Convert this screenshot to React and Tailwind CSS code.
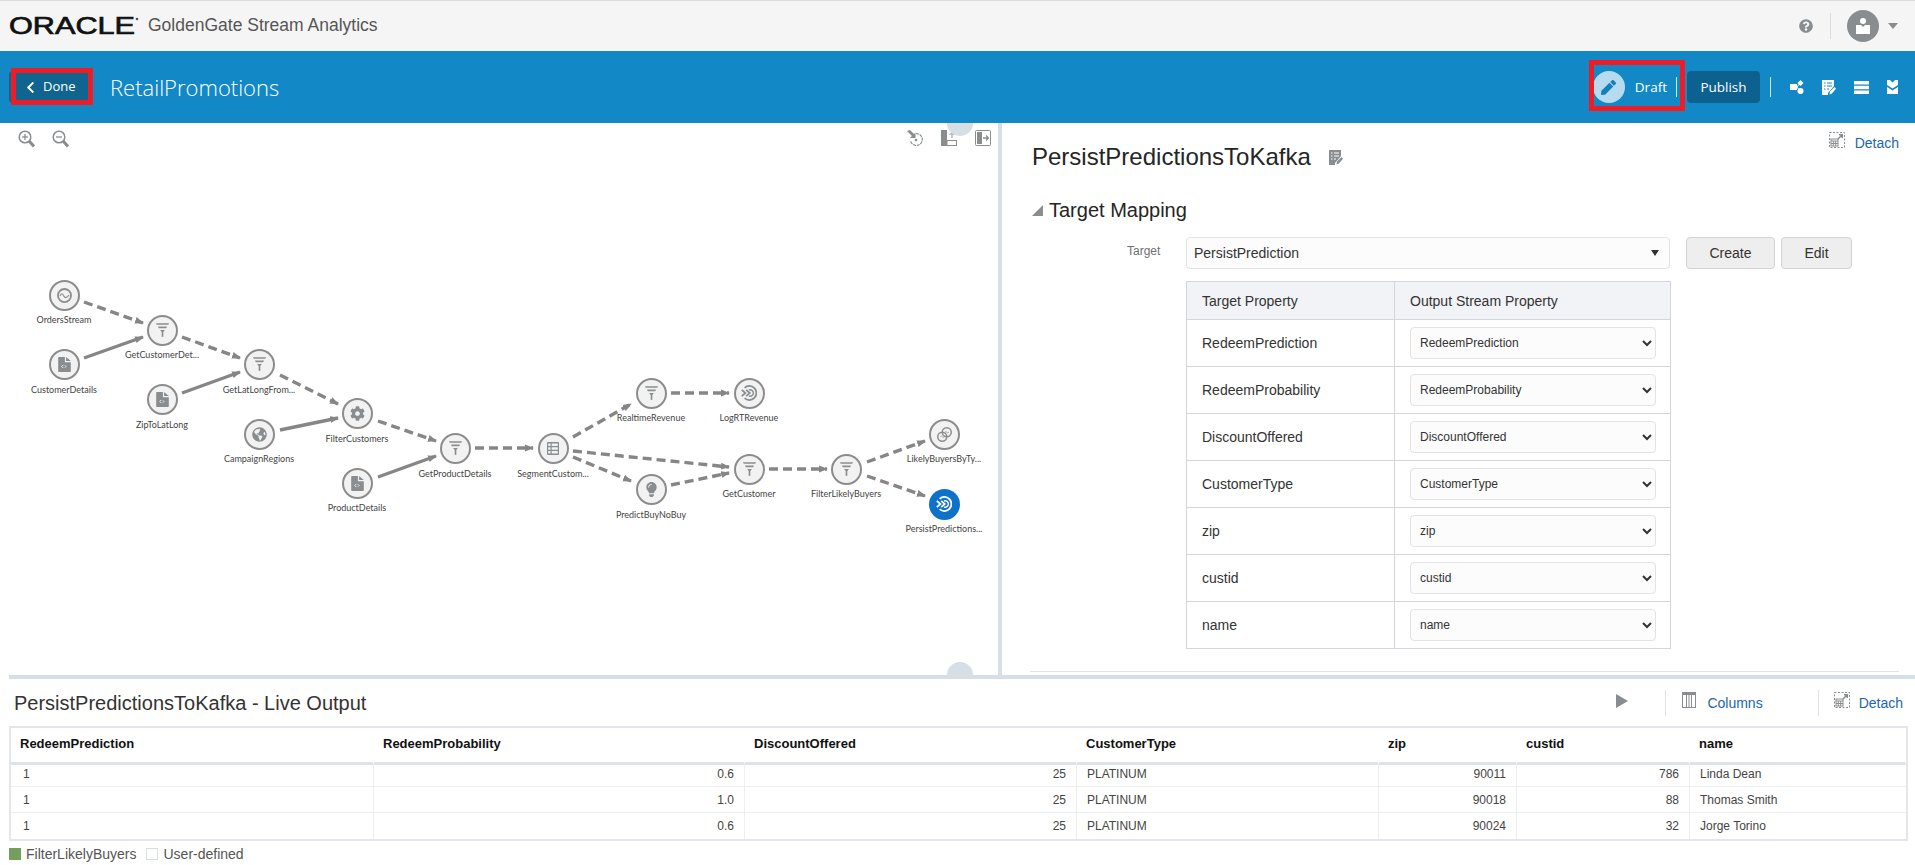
import React from "react";
import { FaChevronLeft, FaCog, FaGlobeAmericas, FaLightbulb, FaPen, FaQuestionCircle } from "react-icons/fa";

const G = "#8a8d8f";

const Filter = ({ c = G }) => (
  <svg width="13" height="14" viewBox="0 0 19 20">
    <path d="M0 0H19L18 2.500H1Z M3 5H16L15 7.500H4Z M6 10H13L11 12.500H8Z" fill={c} />
    <rect x="8.300" y="10" width="2.400" height="10" fill={c} />
  </svg>
);
const Doc = () => (
  <svg width="13" height="15" viewBox="0 0 16 19">
    <path d="M0 1A1 1 0 0 1 1 0H8.500V6.500H16V18A1 1 0 0 1 15 19H1A1 1 0 0 1 0 18Z M10 0L16 5H10Z" fill={G} />
    <path d="M6.500 10L4.500 12L6.500 14" stroke="#f2f2f2" strokeWidth="1.200" fill="none" />
    <path d="M8.500 10.500L10 12L8.500 13.500" stroke="#f2f2f2" strokeWidth="1.200" fill="none" />
  </svg>
);
const Stream = () => (
  <svg width="15" height="15" viewBox="0 0 20 20">
    <circle cx="10" cy="10" r="8.700" stroke={G} strokeWidth="2.400" fill="none" />
    <path d="M4 10.500C6 6.500 7.500 7 9 10.500C10.500 13.500 12 14 16 9.500" stroke={G} strokeWidth="1.500" fill="none" />
  </svg>
);
const Grid = () => (
  <svg width="12" height="13" viewBox="0 0 12 13">
    <rect width="12" height="13" rx="1" fill={G} />
    <path d="M1.200 1.500H3.500V4H1.200Z M1.200 5.300H3.500V7.700H1.200Z M1.200 9H3.500V11.500H1.200Z M4.700 1.500H10.800V4H4.700Z M4.700 5.300H10.800V7.700H4.700Z M4.700 9H10.800V11.500H4.700Z" fill="#f2f2f2" />
  </svg>
);
const Target = ({ c = G }) => (
  <svg width="16" height="16" viewBox="0 0 20 20">
    <path d="M4.500 3.500A8.800 8.800 0 1 1 4.500 16.500" stroke={c} strokeWidth="2.200" fill="none" />
    <path d="M1 6L5.500 10L1 14M6.500 6L11 10L6.500 14" stroke={c} strokeWidth="2.200" fill="none" />
    <path d="M10 6.300A4 4 0 1 1 10 13.700" stroke={c} strokeWidth="1.800" fill="none" />
  </svg>
);
const Rings = () => (
  <svg width="15" height="15" viewBox="0 0 20 20">
    <circle cx="7" cy="13" r="6" stroke={G} strokeWidth="2" fill="none" />
    <circle cx="13" cy="7" r="6" stroke={G} strokeWidth="2" fill="none" />
    <path d="M4.500 13Q6 11 7 13T10 12.500M10.500 7Q12 5 13 7T16 6.500" stroke={G} strokeWidth="1" fill="none" />
  </svg>
);

const icons = {
  filter: <Filter />,
  doc: <Doc />,
  stream: <Stream />,
  grid: <Grid />,
  target: <Target />,
  rings: <Rings />,
  gear: <FaCog size={15} color={G} />,
  globe: <FaGlobeAmericas size={15} color={G} />,
  bulb: <FaLightbulb size={15} color={G} />,
  selected: <Target c="#fff" />,
};

const nodes = [
  ["OrdersStream", 64, 295, 320, "stream"],
  ["GetCustomerDet...", 162, 330, 355, "filter"],
  ["CustomerDetails", 64, 364, 390, "doc"],
  ["GetLatLongFrom...", 259, 364, 390, "filter"],
  ["ZipToLatLong", 162, 399, 425, "doc"],
  ["CampaignRegions", 259, 434, 459, "globe"],
  ["FilterCustomers", 357, 413, 439, "gear"],
  ["GetProductDetails", 455, 448, 474, "filter"],
  ["ProductDetails", 357, 483, 508, "doc"],
  ["SegmentCustom...", 553, 448, 474, "grid"],
  ["RealtimeRevenue", 651, 393, 418, "filter"],
  ["LogRTRevenue", 749, 393, 418, "target"],
  ["PredictBuyNoBuy", 651, 489, 515, "bulb"],
  ["GetCustomer", 749, 469, 494, "filter"],
  ["FilterLikelyBuyers", 846, 469, 494, "filter"],
  ["LikelyBuyersByTy...", 944, 434, 459, "rings"],
  ["PersistPredictions...", 944, 504, 529, "selected"],
];

const edges = [
  [84, 302, 143, 323, 1], [84, 358, 143, 337, 0], [182, 337, 240, 358, 1], [182, 393, 240, 372, 0],
  [280, 375, 338, 404, 1], [280, 430, 338, 418, 0], [378, 421, 436, 441, 1], [378, 477, 436, 456, 0],
  [475, 448, 533, 448, 1], [573, 437, 631, 404, 1], [573, 451, 729, 467, 1], [573, 457, 631, 481, 1],
  [671, 393, 729, 393, 1], [671, 485, 729, 473, 1], [769, 469, 827, 469, 1], [867, 462, 925, 441, 1],
  [867, 476, 925, 496, 1],
];

function Canvas() {
  return (
    <div className="absolute inset-0 overflow-hidden">
      <svg className="absolute left-0 top-0" width="998" height="552" viewBox="0 123 998 552">
        <defs>
          <marker id="arrow" markerUnits="userSpaceOnUse" markerWidth="9" markerHeight="8" refX="8" refY="4" orient="auto">
            <path d="M0 0.500L9 4L0 7.500Z" fill="#868686" />
          </marker>
        </defs>
        {edges.map(([a, b, c, d, dashed], i) => (
          <line key={i} x1={a} y1={b} x2={c} y2={d} stroke="#868686" strokeWidth="3.400" strokeDasharray={dashed ? "9 5" : undefined} markerEnd="url(#arrow)" />
        ))}
      </svg>
      {nodes.map(([name, x, y, ly, icon]) => (
        <React.Fragment key={name}>
          <div
            className={
              icon === "selected"
                ? "absolute flex h-[31px] w-[31px] items-center justify-center rounded-full bg-[#0f72c8]"
                : "absolute flex h-[31px] w-[31px] items-center justify-center rounded-full border-2 border-[#8c8c8c] bg-[#f2f2f2]"
            }
            style={{ left: x - 15.5, top: y - 123 - 15.5 }}
          >
            {icons[icon]}
          </div>
          <div
            className="absolute w-[110px] text-center font-['Lato',sans-serif] text-[9px] leading-[14px] text-[#444]"
            style={{ left: x - 55, top: ly - 123 - 7 }}
          >
            {name}
          </div>
        </React.Fragment>
      ))}
    </div>
  );
}

const Zoom = ({ plus }) => (
  <svg width="17" height="18" viewBox="0 0 17 18">
    <circle cx="7" cy="7" r="5.800" fill="none" stroke={G} strokeWidth="1.500" />
    <path d="M4 7H10" stroke={G} strokeWidth="1.300" />
    {plus && <path d="M7 4V10" stroke={G} strokeWidth="1.300" />}
    <path d="M11 11L16 16.500" stroke={G} strokeWidth="3" />
  </svg>
);

const DetachIcon = () => (
  <svg width="16" height="16" viewBox="0 0 16 16">
    <rect x="0.500" y="0.500" width="15" height="15" fill="none" stroke={G} strokeDasharray="2 1.500" />
    <rect x="2" y="7" width="7" height="7" fill="none" stroke={G} />
    <path d="M2 9H9M4.300 9V14M6.700 9V14M2 11.500H9" stroke={G} />
    <path d="M9 7L13 3M10 2.800H13.300V6" stroke={G} strokeWidth="1.500" fill="none" />
  </svg>
);

const EditDoc = ({ c = G, s = 14 }) => (
  <svg width={s} height={s + 1} viewBox="0 0 14 15">
    <path d="M0 0H12V6L6 13V15H0Z" fill={c} />
    <path d="M2 3H3.500M5 3H10M2 6H3.500M5 6H10M2 9H3.500M5 9H7" stroke={c === "#fff" ? "#1289c6" : "#fff"} strokeWidth="1" />
    <path d="M7.500 14.500L8 11.500L12.500 7L14 8.700L9.700 13.700Z" fill={c} />
  </svg>
);

const BarIcons = () => (
  <div className="flex items-center gap-[18px]">
    <svg width="14" height="14" viewBox="0 0 14 14">
      <rect x="0" y="4" width="7" height="6" fill="#fff" />
      <path d="M10.500 0L13.500 3L10.500 6L7.500 3Z" fill="#fff" />
      <circle cx="10.500" cy="11" r="3" fill="#fff" />
      <path d="M7 7L10 3M7 7L10 11" stroke="#fff" />
    </svg>
    <EditDoc c="#fff" s={14} />
    <svg width="15" height="13" viewBox="0 0 15 13">
      <path d="M0 0H15V3.500H0Z M0 4.700H15V8.200H0Z M0 9.500H15V13H0Z" fill="#fff" />
    </svg>
    <svg width="11" height="14" viewBox="0 0 11 14">
      <path d="M0 0H3L5.500 2.500L8 0H11V5L5.500 8.500L0 5Z M0 7L5.500 10.500L11 7V14H0Z" fill="#fff" />
    </svg>
  </div>
);

const Label = ({ children }) => <span className="text-sm leading-none text-[#1a67ae]">{children}</span>;

const mapping = ["RedeemPrediction", "RedeemProbability", "DiscountOffered", "CustomerType", "zip", "custid", "name"];

const rows = [
  ["1", "0.6", "25", "PLATINUM", "90011", "786", "Linda Dean"],
  ["1", "1.0", "25", "PLATINUM", "90018", "88", "Thomas Smith"],
  ["1", "0.6", "25", "PLATINUM", "90024", "32", "Jorge Torino"],
];

const RIGHT = [false, true, true, false, true, true, false];

export default function App() {
  return (
    <div className="relative h-[865px] w-[1915px] overflow-hidden bg-white font-['Liberation_Sans',Arial,sans-serif] text-[#333]">
      {/* top bar */}
      <header className="flex h-[51px] items-center border-t border-[#dcdcdc] bg-[#f5f5f5]">
        <svg width="130" height="30" viewBox="0 -3 130 30" className="ml-[9px] overflow-visible">
          <text x="0" y="20" fontFamily="Liberation Sans" fontWeight="400" fontSize="24" fill="#111" stroke="#111" strokeWidth="0.700" textLength="126" lengthAdjust="spacingAndGlyphs">ORACLE</text>
          <circle cx="128" cy="5" r="1.300" fill="#555" />
        </svg>
        <span className="ml-[9px] text-[17.5px] leading-none text-[#555]">GoldenGate Stream Analytics</span>
        <div className="ml-auto flex items-center pr-[17px]">
          <FaQuestionCircle size={14} color="#8a8d8f" />
          <div className="ml-[17px] h-[26px] w-px bg-[#dcdcdc]" />
          <div className="ml-[16px] flex h-8 w-8 items-center justify-center rounded-full bg-[#8a8d8f]">
            <svg width="14" height="16" viewBox="0 0 14 16">
              <circle cx="7" cy="3" r="3" fill="#fff" />
              <path d="M0 7H5L7 9L9 7H14V16H0Z" fill="#fff" />
            </svg>
          </div>
          <div className="ml-[9px] h-0 w-0 border-x-[5px] border-t-[6px] border-x-transparent border-t-[#8a8d8f]" />
        </div>
      </header>

      {/* blue bar */}
      <div className="flex h-[72px] items-center bg-[#1289c6] text-white">
        <div className="relative ml-[9px] flex h-8 w-[79px] items-center rounded-sm bg-[#0f6490] pl-[15px] font-['Open_Sans',sans-serif] text-[13px]">
          <FaChevronLeft size={13} />
          <span className="ml-[6px]">Done</span>
          <div className="absolute -bottom-[2px] -right-[5px] -top-[3px] left-[2px] border-[5px] border-[#ee1c25]" />
        </div>
        <span className="ml-[22px] font-['Open_Sans',sans-serif] text-[22px] font-light">RetailPromotions</span>
        <div className="ml-auto flex items-center pr-[17px]">
          <div className="relative flex items-center">
            <div className="flex h-8 w-8 items-center justify-center rounded-full bg-[#b7dbee]">
              <FaPen size={15} color="#1280bd" />
            </div>
            <span className="ml-[10px] font-['Open_Sans',sans-serif] text-[13.5px]">Draft</span>
            <div className="ml-[9px] h-5 w-px bg-[#cfe7f4]" />
            <div className="absolute -left-[4px] -top-[11px] h-[51px] w-[96px] border-[5px] border-[#ee1c25]" />
          </div>
          <button className="ml-[10px] h-8 w-[73px] rounded-sm bg-[#0d618f] font-['Open_Sans',sans-serif] text-[13.5px] text-white">Publish</button>
          <div className="ml-[10px] mr-[19px] h-5 w-px bg-[#cfe7f4]" />
          <BarIcons />
        </div>
      </div>

      {/* main split */}
      <div className="flex h-[552px]">
        <section className="relative w-[998px] shrink-0">
          <Canvas />
          <div className="relative flex items-start justify-between pl-[18px] pr-[7px] pt-[7px]">
            <div className="flex gap-[17px]">
              <Zoom plus />
              <Zoom />
            </div>
            <div className="flex gap-[18px]">
              <svg width="16" height="16" viewBox="0 0 16 16">
                <path d="M0 1L3 0L7 4L8.500 2.500V8H3L5 6Z" fill={G} />
                <path d="M9 3.500A6 6 0 1 1 3.500 11" fill="none" stroke={G} strokeWidth="1.200" strokeDasharray="3 0.800" />
                <circle cx="9" cy="10" r="1.300" fill={G} />
              </svg>
              <svg width="16" height="16" viewBox="0 0 16 16">
                <path d="M0 0H6V16H0Z" fill={G} />
                <rect x="6" y="10.500" width="9.500" height="5" fill="none" stroke={G} />
                <path d="M11 8V3M8.500 5L11 2.500L13 5" stroke={G} fill="none" />
              </svg>
              <svg width="16" height="16" viewBox="0 0 16 16">
                <rect x="0.500" y="0.500" width="15" height="15" rx="1" fill="none" stroke={G} />
                <path d="M2 2H7V14H2Z" fill={G} />
                <path d="M8 8H13M11 5.500L13.500 8L11 10.500" stroke={G} strokeWidth="1.300" fill="none" />
              </svg>
            </div>
          </div>
        </section>
        <div className="w-1 shrink-0 bg-[#d6dfe6]" />
        <section className="relative flex-1 pl-[30px]">
          <div className="flex items-center pt-[20px]">
            <h1 className="text-2xl leading-[28px] text-[#252525]">PersistPredictionsToKafka</h1>
            <span className="ml-[18px]"><EditDoc /></span>
            <div className="ml-auto mr-[16px] -mt-[28px] flex items-center gap-[10px]">
              <span className="mb-[6px]"><DetachIcon /></span>
              <Label>Detach</Label>
            </div>
          </div>
          <div className="mt-[27px] flex items-center">
            <div className="h-0 w-0 border-b-[11px] border-l-[11px] border-b-[#8a8d8f] border-l-transparent" />
            <h2 className="ml-[6px] text-xl leading-[24px] text-[#252525]">Target Mapping</h2>
          </div>
          <div className="mt-[15px] flex items-start">
            <span className="ml-[95px] w-[59px] pt-[6px] text-xs text-[#6f6f6f]">Target</span>
            <div className="w-[484px]">
              <div className="flex h-[32px] items-center justify-between rounded-sm border border-[#e3e3e3] bg-[#fcfcfc] pl-[7px] pr-[10px] text-sm">
                <span>PersistPrediction</span>
                <div className="h-0 w-0 border-x-[4px] border-t-[6px] border-x-transparent border-t-[#333]" />
              </div>
              <table className="mt-[12px] w-[484px] table-fixed border-collapse text-sm">
                <colgroup>
                  <col className="w-[208px]" />
                  <col className="w-[276px]" />
                </colgroup>
                <thead>
                  <tr className="h-[38px] bg-[#f1f3f7]">
                    <th className="border border-[#d3d6da] pl-[15px] text-left font-normal">Target Property</th>
                    <th className="border border-[#d3d6da] pl-[15px] text-left font-normal">Output Stream Property</th>
                  </tr>
                </thead>
                <tbody>
                  {mapping.map((m) => (
                    <tr key={m} className="h-[47px]">
                      <td className="border border-[#d3d6da] pl-[15px]">{m}</td>
                      <td className="border border-[#d3d6da] pl-[15px]">
                        <select
                          defaultValue={m}
                          className="block h-8 w-[246px] rounded-sm border border-[#e3e3e3] bg-[#fcfcfc] pl-[5px] text-xs text-[#333]"
                        >
                          <option value={m}>{m}</option>
                        </select>
                      </td>
                    </tr>
                  ))}
                </tbody>
              </table>
            </div>
            <button className="ml-[16px] h-[32px] w-[89px] rounded-sm border border-[#d3d3d3] bg-[#eeeeee] text-sm">Create</button>
            <button className="ml-[6px] h-[32px] w-[71px] rounded-sm border border-[#d3d3d3] bg-[#eeeeee] text-sm">Edit</button>
          </div>
          <div className="absolute bottom-[3px] left-[28px] right-[16px] h-px bg-[#dfe4ea]" />
        </section>
      </div>

      {/* bottom */}
      <div className="ml-[9px] h-1 bg-[#d6dfe6]" />
      <div className="flex h-[47px] items-center pl-[14px] pr-[12px]">
        <h3 className="text-xl leading-none text-[#333]">PersistPredictionsToKafka - Live Output</h3>
        <div className="ml-auto flex items-center">
          <div className="mb-[4px] h-0 w-0 border-y-[7px] border-l-[12px] border-y-transparent border-l-[#8a8d8f]" />
          <div className="ml-[37px] h-[26px] w-px bg-[#dfe2e6]" />
          <svg width="14" height="16" viewBox="0 0 14 16" className="mb-[6px] ml-[16px]">
            <rect x="0.500" y="0.500" width="13" height="15" fill="none" stroke={G} />
            <path d="M1 1H13V3H1Z" fill={G} />
            <path d="M4.500 3V15M7 3V15M9.500 3V15" stroke={G} />
          </svg>
          <span className="ml-[11px] mr-[55px]"><Label>Columns</Label></span>
          <div className="h-[26px] w-px bg-[#dfe2e6]" />
          <span className="mb-[6px] ml-[15px] mr-[9px]"><DetachIcon /></span>
          <Label>Detach</Label>
        </div>
      </div>
      <div className="ml-[9px] w-[1899px] border-2 border-[#e3e6ea]">
        <table className="w-[1895px] table-fixed border-separate border-spacing-0 text-xs">
          <colgroup>
            {[363, 371, 332, 302, 138, 173, 216].map((w, i) => (
              <col key={i} style={{ width: w }} />
            ))}
          </colgroup>
          <thead>
            <tr className="h-[37px]">
              {["RedeemPrediction", "RedeemProbability", "DiscountOffered", "CustomerType", "zip", "custid", "name"].map((h) => (
                <th key={h} className="border-b-[3px] border-r border-b-[#dee3e8] border-r-white pb-[2px] pl-[9px] text-left text-[13px] font-bold text-[#111]">
                  {h}
                </th>
              ))}
            </tr>
          </thead>
          <tbody>
            {rows.map((r, i) => (
              <tr key={i} className={i === 0 ? "h-[22px]" : "h-[26px]"}>
                {r.map((v, j) => (
                  <td
                    key={j}
                    className={
                      (RIGHT[j] ? "pr-[10px] text-right " : j === 0 ? "pl-[12px] text-left " : "pl-[10px] text-left ") +
                      (i === 0 ? "pb-[4px] " : "") +
                      (i < 2 ? "border-b border-b-[#eceef0] " : "") +
                      (j < 6 ? "border-r border-r-[#eceef0] " : "") +
                      "text-[#444]"
                    }
                  >
                    {v}
                  </td>
                ))}
              </tr>
            ))}
          </tbody>
        </table>
      </div>
      <div className="ml-[9px] mt-[6px] flex items-center text-sm leading-[14px] text-[#555]">
        <div className="h-3 w-3 bg-[#739f5b]" />
        <span className="ml-[5px]">FilterLikelyBuyers</span>
        <div className="ml-[10px] h-3 w-3 border border-[#d9dde2]" />
        <span className="ml-[5px]">User-defined</span>
      </div>

      {/* splitter handles */}
      <div className="absolute left-[947px] top-[110px] h-[26px] w-[26px] rounded-full bg-[#d6dfe6]" style={{ clipPath: "inset(13px 0 0 0)" }} />
      <div className="absolute left-[947px] top-[662px] h-[26px] w-[26px] rounded-full bg-[#d6dfe6]" style={{ clipPath: "inset(0 0 13px 0)" }} />
    </div>
  );
}
